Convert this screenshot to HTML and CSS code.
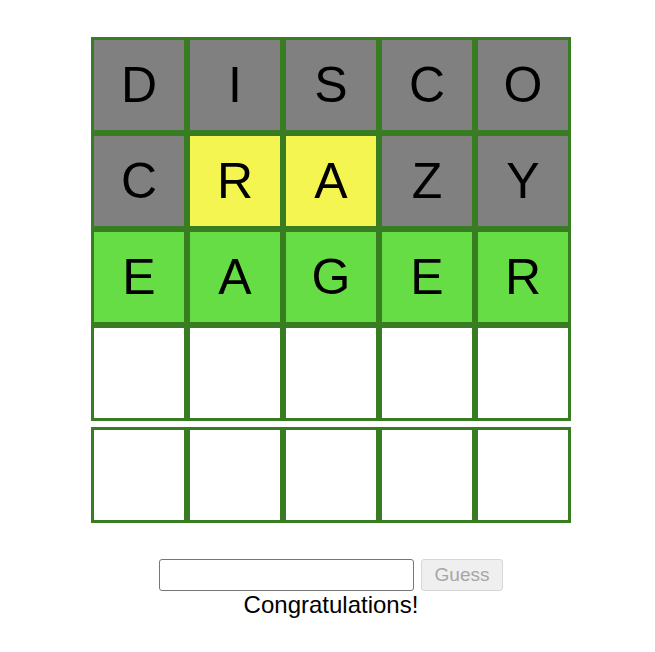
FILE: index.html
```html
<!DOCTYPE html>
<html>
<head>
<meta charset="utf-8">
<link rel="stylesheet" href="styles.css">
</head>
<body>
<div class="game">
  <div class="board">
    <div class="row">
      <div class="tile gray">D</div><div class="tile gray">I</div><div class="tile gray">S</div><div class="tile gray">C</div><div class="tile gray">O</div>
    </div>
    <div class="row">
      <div class="tile gray">C</div><div class="tile yellow">R</div><div class="tile yellow">A</div><div class="tile gray">Z</div><div class="tile gray">Y</div>
    </div>
    <div class="row">
      <div class="tile green">E</div><div class="tile green">A</div><div class="tile green">G</div><div class="tile green">E</div><div class="tile green">R</div>
    </div>
    <div class="row">
      <div class="tile"></div><div class="tile"></div><div class="tile"></div><div class="tile"></div><div class="tile"></div>
    </div>
    <div class="row last">
      <div class="tile"></div><div class="tile"></div><div class="tile"></div><div class="tile"></div><div class="tile"></div>
    </div>
  </div>
  <div class="controls">
    <input class="guess-input" type="text">
    <button class="guess-btn" disabled>Guess</button>
  </div>
  <div class="message">Congratulations!</div>
</div>
</body>
</html>
```
FILE: styles.css
```css
html, body {
  margin: 0;
  padding: 0;
  background: #fff;
  font-family: "Liberation Sans", Arial, sans-serif;
}
.game {
  width: 480px;
  margin: 37px 0 0 91px;
}
.board {
  display: flex;
  flex-direction: column;
}
.row {
  display: flex;
}
.row.last {
  margin-top: 6px;
}
.tile {
  width: 96px;
  height: 96px;
  box-sizing: border-box;
  border: 3px solid #387d22;
  display: flex;
  align-items: center;
  justify-content: center;
  font-size: 50px;
  color: #000;
  background: #fff;
}
.tile.gray { background: #808080; }
.tile.yellow { background: #f5f552; }
.tile.green { background: #66dd44; }
.controls {
  display: flex;
  justify-content: center;
  align-items: center;
  gap: 7px;
  margin-top: 36px;
}
.guess-input {
  width: 255px;
  height: 32px;
  box-sizing: border-box;
  border: 1px solid #767676;
  border-radius: 3px;
  padding: 0 4px;
  font-family: inherit;
  font-size: 16px;
  margin: 0;
}
.guess-btn {
  width: 82px;
  height: 32px;
  box-sizing: border-box;
  border: 1px solid #d6d6d6;
  border-radius: 3px;
  background: #efefef;
  color: #a6a6a6;
  font-family: inherit;
  font-size: 19px;
  margin: 0;
  padding: 0;
}
.message {
  text-align: center;
  font-size: 24px;
  line-height: 28px;
  margin-top: 0;
  color: #000;
}
```
